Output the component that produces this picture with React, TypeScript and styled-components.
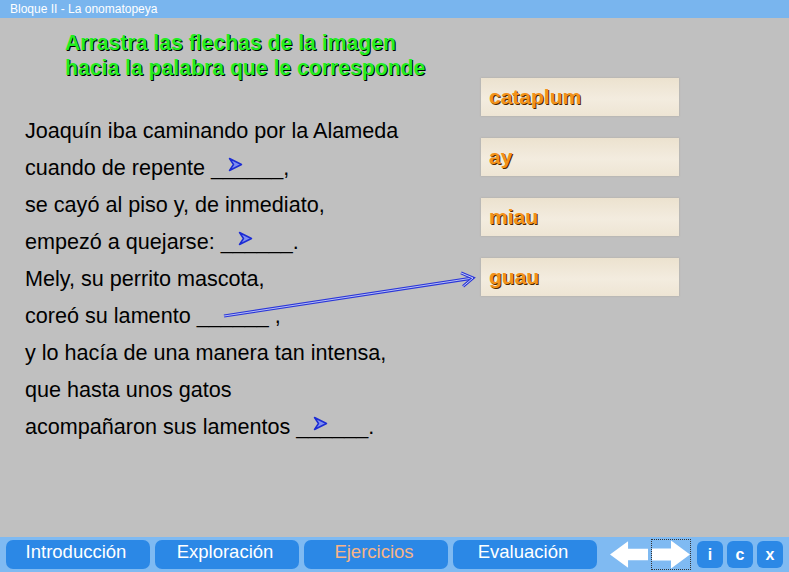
import React from 'react';
import styled, { createGlobalStyle } from 'styled-components';

const Global = createGlobalStyle`
  html, body { margin: 0; padding: 0; }
  body {
    width: 789px; height: 572px; overflow: hidden; background: #c0c0c0;
    font-family: "Liberation Sans", Arial, sans-serif;
  }
`;

const Page = styled.div`
  width: 789px; height: 572px; display: flex; flex-direction: column; background: #c0c0c0;
`;

const TitleBar = styled.header`
  flex: none; height: 18px; background: #79b5ee; color: #fff;
  font-size: 12px; line-height: 18px; padding-left: 10px;
`;

const Main = styled.main`
  position: relative; flex: 1; display: flex;
`;

const Left = styled.section`
  width: 481px; padding-left: 25px; box-sizing: border-box;
`;

const Instructions = styled.h1`
  margin: 12px 0 0 40px; font-size: 21.2px; line-height: 25px; font-weight: bold;
  color: #22ee22; text-shadow: 1px 1px 0 #000;
`;

const Story = styled.div`
  margin-top: 32px; font-size: 21.6px; line-height: 37px; color: #000;
`;

const Line = styled.div`
  white-space: pre;
`;

const Blank = styled.span`
  position: relative;
`;

const ArrowMark = styled.svg`
  position: absolute; left: 17px; top: 2px; width: 15px; height: 15px;
`;

const Right = styled.aside`
  width: 198px; padding-top: 60px; display: flex; flex-direction: column; gap: 22px;
`;

const WordBox = styled.div`
  height: 38px; box-sizing: border-box; padding-left: 8px;
  display: flex; align-items: center;
  background: linear-gradient(to bottom, #ece2cf 0%, #f3ecdf 55%, #eee5d4 100%);
  box-shadow: 0 0 2px rgba(120, 100, 70, 0.25);
  font-size: 21px; font-weight: bold; color: #f3921a;
  text-shadow: 1px 1px 0 #4a2800;
`;

const Overlay = styled.svg`
  position: absolute; left: 0; top: 0; width: 100%; height: 100%; pointer-events: none;
`;

const NavBar = styled.nav`
  flex: none; height: 35px; background: #7fbaf2;
  display: flex; align-items: center; padding-left: 6px; box-sizing: border-box;
`;

const Tabs = styled.div`
  display: flex; gap: 5px;
`;

const Tab = styled.button<{ $active?: boolean }>`
  width: 144px; height: 29px; border: none; border-radius: 7px; padding: 0;
  background: #2b88e6; color: ${(p) => (p.$active ? '#f6b486' : '#fff')};
  font-family: "Liberation Sans", Arial, sans-serif; font-size: 18.5px;
  padding-bottom: 5px; padding-right: 4px;
`;

const Arrows = styled.div`
  display: flex; margin-left: 12px; gap: 2px; align-items: center;
`;

const ArrowBtn = styled.button<{ $focus?: boolean }>`
  width: 40px; height: 31px; padding: 0; background: none; border: 1px dotted ${(p) => (p.$focus ? '#333' : 'transparent')};
  display: flex; align-items: center; justify-content: center; box-sizing: border-box;
`;

const Tools = styled.div`
  display: flex; gap: 4px; margin-left: 6px;
`;

const ToolBtn = styled.button`
  width: 26px; height: 27px; border: none; border-radius: 6px; padding: 0;
  background: #2b88e6; color: #fff; font-family: "Liberation Sans", Arial, sans-serif;
  font-weight: bold; font-size: 16px;
`;

const Mark = () => (
  <ArrowMark viewBox="0 0 15 15">
    <polygon points="1.5,1.5 13.5,7.5 1.5,13.5 5.5,7.5" fill="#7f8ff2" stroke="#1c2cd4" strokeWidth="1.5" strokeLinejoin="round" />
  </ArrowMark>
);

const BlankSlot = ({ mark }: { mark?: boolean }) => (
  <Blank>
    ______
    {mark && <Mark />}
  </Blank>
);

const LongArrow = () => {
  const x1 = 224, y1 = 298, x2 = 473, y2 = 260;
  const ang = Math.atan2(y2 - y1, x2 - x1);
  const len = 13;
  const a1 = ang + Math.PI - 0.55;
  const a2 = ang + Math.PI + 0.55;
  const p1 = `${x2 + len * Math.cos(a1)},${y2 + len * Math.sin(a1)}`;
  const p2 = `${x2 + len * Math.cos(a2)},${y2 + len * Math.sin(a2)}`;
  const d = `M${p1} L${x2},${y2} L${p2}`;
  return (
    <Overlay>
      <line x1={x1} y1={y1} x2={x2 - 2} y2={y2 + 0.3} stroke="#2a36d8" strokeWidth="3.2" />
      <line x1={x1} y1={y1} x2={x2 - 2} y2={y2 + 0.3} stroke="#b9c0f5" strokeWidth="1" />
      <path d={d} fill="none" stroke="#2a36d8" strokeWidth="3" strokeLinejoin="miter" />
      <path d={d} fill="none" stroke="#c6ccf6" strokeWidth="1" />
    </Overlay>
  );
};

const LeftArrow = () => (
  <svg width="40" height="29" viewBox="0 0 40 29">
    <path d="M0,14.5 L19,0.5 L19,8.5 L40,8.5 L40,20.5 L19,20.5 L19,28.5 Z" fill="#fff" />
  </svg>
);

const RightArrow = () => (
  <svg width="38" height="29" viewBox="0 0 38 29">
    <path d="M38,14.5 L19,0.5 L19,8.5 L0,8.5 L0,20.5 L19,20.5 L19,28.5 Z" fill="#fff" />
  </svg>
);

export default function App() {
  return (
    <>
      <Global />
      <Page>
        <TitleBar>Bloque II - La onomatopeya</TitleBar>
        <Main>
          <Left>
            <Instructions>
              Arrastra las flechas de la imagen
              <br />
              hacia la palabra que le corresponde
            </Instructions>
            <Story>
              <Line>Joaquín iba caminando por la Alameda</Line>
              <Line>cuando de repente <BlankSlot mark />,</Line>
              <Line>se cayó al piso y, de inmediato,</Line>
              <Line>empezó a quejarse: <BlankSlot mark />.</Line>
              <Line>Mely, su perrito mascota,</Line>
              <Line>coreó su lamento <BlankSlot /> ,</Line>
              <Line>y lo hacía de una manera tan intensa,</Line>
              <Line>que hasta unos gatos</Line>
              <Line>acompañaron sus lamentos <BlankSlot mark />.</Line>
            </Story>
          </Left>
          <Right>
            <WordBox>cataplum</WordBox>
            <WordBox>ay</WordBox>
            <WordBox>miau</WordBox>
            <WordBox>guau</WordBox>
          </Right>
          <LongArrow />
        </Main>
        <NavBar>
          <Tabs>
            <Tab>Introducción</Tab>
            <Tab>Exploración</Tab>
            <Tab $active>Ejercicios</Tab>
            <Tab>Evaluación</Tab>
          </Tabs>
          <Arrows>
            <ArrowBtn><LeftArrow /></ArrowBtn>
            <ArrowBtn $focus><RightArrow /></ArrowBtn>
          </Arrows>
          <Tools>
            <ToolBtn>i</ToolBtn>
            <ToolBtn>c</ToolBtn>
            <ToolBtn>x</ToolBtn>
          </Tools>
        </NavBar>
      </Page>
    </>
  );
}
